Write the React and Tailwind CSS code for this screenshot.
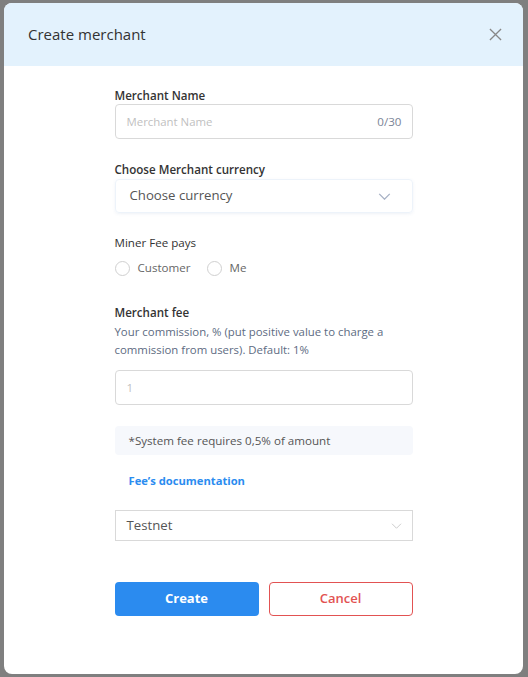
import React from 'react';

const font = { fontFamily: '"Open Sans", "Noto Sans", sans-serif' };

const Chevron = ({ className }) => (
  <svg viewBox="0 0 14 8" className={className} fill="none" stroke="currentColor">
    <path d="M1 1l6 6 6-6" />
  </svg>
);

const Radio = ({ label }) => (
  <label className="flex items-center gap-2">
    <span className="w-[15px] h-[15px] rounded-full border border-[#d0d0d0] bg-white" />
    <span className="text-[11.6px] text-[#666]">{label}</span>
  </label>
);

export default function App() {
  return (
    <div className="w-[528px] h-[677px] bg-[#7f7f7f] pt-[3px] pl-[4px]" style={font}>
      <div className="w-[519px] h-[671px] bg-white rounded-lg overflow-hidden flex flex-col">
        {/* header */}
        <div className="h-[63px] bg-[#e3f2fd] pl-6 pr-[21px] flex items-center justify-between">
          <h3 className="text-[15px] text-[#333] font-normal">Create merchant</h3>
          <svg viewBox="0 0 14 14" className="w-[13px] h-[13px] text-[#888]" fill="none" stroke="currentColor" strokeWidth="1.4">
            <path d="M1 1l12 12M13 1L1 13" />
          </svg>
        </div>

        {/* form */}
        <div className="w-[298px] mx-auto pt-[22px] flex flex-col">
          <div className="text-[11.6px] leading-4 font-semibold text-[#333]">Merchant Name</div>
          <div className="h-[35px] border border-[#d9d9d9] rounded flex items-center justify-between pl-[11px] pr-[10px]">
            <span className="text-[11.4px] text-[#bfbfbf]">Merchant Name</span>
            <span className="text-[11.6px] text-[#7b8497]">0/30</span>
          </div>

          <div className="mt-[23px] text-[11.6px] leading-4 font-semibold text-[#333]">Choose Merchant currency</div>
          <div className="mt-px h-[34px] border border-[#edf3fa] rounded shadow-[0_1px_3px_rgba(120,150,190,0.12)] flex items-center justify-between pl-[14px] pr-[21px]">
            <span className="text-[13.2px] text-[#555]">Choose currency</span>
            <Chevron className="w-[13px] h-[7px] text-[#a9b3c6] [stroke-width:1.6]" />
          </div>

          <div className="mt-[22px] text-[11.6px] leading-4 text-[#333]">Miner Fee pays</div>
          <div className="mt-[9px] h-4 flex items-center gap-4">
            <Radio label="Customer" />
            <Radio label="Me" />
          </div>

          <div className="mt-[29px] text-[11.6px] leading-4 font-semibold text-[#333]">Merchant fee</div>
          <p className="mt-[2px] text-[11.4px] leading-[18px] text-[#5d6b82]">
            Your commission, % (put positive value to charge a commission from users). Default: 1%
          </p>
          <div className="mt-[11px] h-[35px] border border-[#d9d9d9] rounded flex items-center pl-[11px]">
            <span className="text-[11.6px] text-[#bfbfbf]">1</span>
          </div>

          <div className="mt-[21px] h-[29px] bg-[#f6f8fc] rounded flex items-center px-[14px]">
            <span className="text-[11.6px] text-[#555]">*System fee requires 0,5% of amount</span>
          </div>

          <a className="mt-[18px] pl-[14px] text-[11.2px] leading-4 font-bold text-[#2a8cf0]">Fee’s documentation</a>

          <div className="mt-[21px] h-[31px] border border-[#d9d9d9] flex items-center justify-between pl-[11px] pr-[10px]">
            <span className="text-[13.2px] text-[#555]">Testnet</span>
            <Chevron className="w-[11px] h-[6px] text-[#bbb] [stroke-width:1]" />
          </div>

          <div className="mt-[41px] flex gap-[10px]">
            <button className="w-[144px] h-[34px] rounded bg-[#2b8bef] text-white text-[13px] leading-4 font-bold pb-[2px]">Create</button>
            <button className="w-[144px] h-[34px] rounded border border-[#e25252] text-[#e25252] text-[13px] leading-4 font-semibold pb-[2px]">Cancel</button>
          </div>
        </div>
      </div>
    </div>
  );
}
